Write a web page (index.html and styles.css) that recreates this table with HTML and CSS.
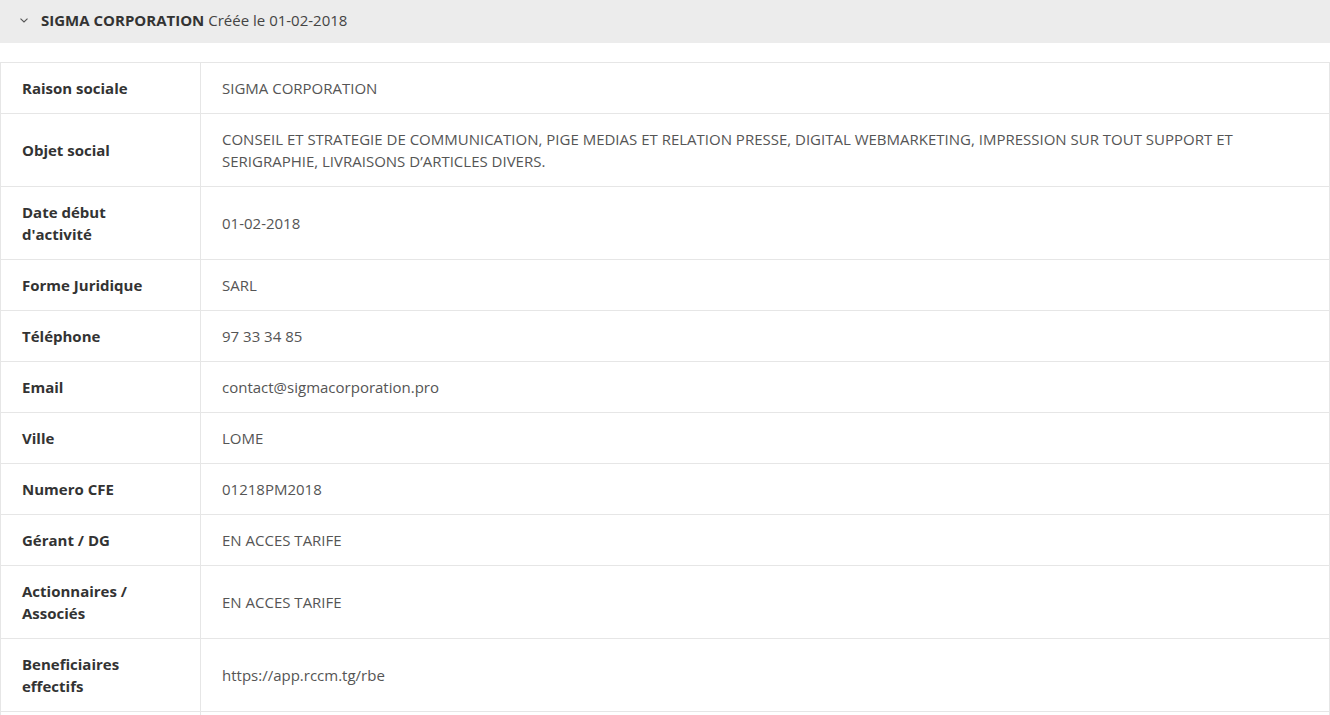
FILE: index.html
```html
<!DOCTYPE html>
<html lang="fr">
<head>
<meta charset="utf-8">
<title>SIGMA CORPORATION</title>
<link rel="stylesheet" href="styles.css">
</head>
<body>
<div class="panel">
  <div class="panel-heading">
    <svg class="chev" width="8" height="5" viewBox="0 0 8 5"><path d="M0.5 0.6 L4 4 L7.5 0.6" fill="none" stroke="#555" stroke-width="1.1"/></svg>
    <span class="name">SIGMA CORPORATION</span>
    <span class="created">Créée le 01-02-2018</span>
  </div>
  <table class="info">
    <tbody>
      <tr><th>Raison sociale</th><td>SIGMA CORPORATION</td></tr>
      <tr><th>Objet social</th><td>CONSEIL ET STRATEGIE DE COMMUNICATION, PIGE MEDIAS ET RELATION PRESSE, DIGITAL WEBMARKETING, IMPRESSION SUR TOUT SUPPORT ET SERIGRAPHIE, LIVRAISONS D’ARTICLES DIVERS.</td></tr>
      <tr><th>Date début d'activité</th><td>01-02-2018</td></tr>
      <tr><th>Forme Juridique</th><td>SARL</td></tr>
      <tr><th>Téléphone</th><td>97 33 34 85</td></tr>
      <tr><th>Email</th><td>contact@sigmacorporation.pro</td></tr>
      <tr><th>Ville</th><td>LOME</td></tr>
      <tr><th>Numero CFE</th><td>01218PM2018</td></tr>
      <tr><th>Gérant / DG</th><td>EN ACCES TARIFE</td></tr>
      <tr><th>Actionnaires / Associés</th><td>EN ACCES TARIFE</td></tr>
      <tr><th>Beneficiaires effectifs</th><td>https://app.rccm.tg/rbe</td></tr>
      <tr><th>&nbsp;</th><td>&nbsp;</td></tr>
    </tbody>
  </table>
</div>
</body>
</html>
```
FILE: styles.css
```css
html, body {
  margin: 0;
  padding: 0;
  background: #fff;
}
body {
  font-family: "Open Sans", "Noto Sans", sans-serif;
  font-size: 15px;
  line-height: 22px;
  color: #555;
}
.panel-heading {
  display: flex;
  align-items: center;
  height: 43px;
  padding: 0 0 3px 20px;
  background: #ececec;
  color: #333;
  box-sizing: border-box;
}
.chev {
  margin-right: 13px;
  margin-top: 1px;
}
.name {
  font-weight: 700;
  margin-right: 4px;
}
.created {
  color: #444;
}
.info {
  margin-top: 19px;
  width: 100%;
  border-collapse: collapse;
  table-layout: fixed;
}
.info th, .info td {
  border: 1px solid #e6e6e6;
  padding: 14px 21px;
  vertical-align: middle;
  text-align: left;
}
.info th {
  width: 150px;
  padding-right: 28px;
  font-weight: 700;
  color: #333;
}
.info td {
  color: #555;
}
```
